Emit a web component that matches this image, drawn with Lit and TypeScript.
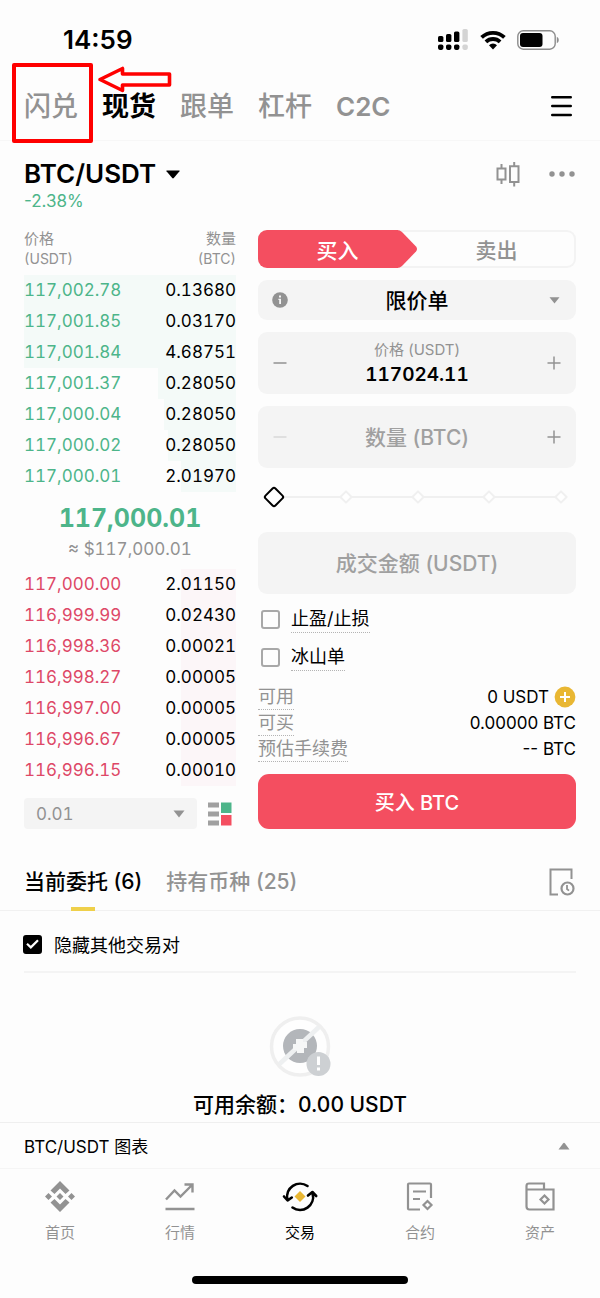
import { LitElement, html, css, svg } from "lit";
import { customElement, property, state } from "lit/decorators.js";
import { classMap } from "lit/directives/class-map.js";
import { styleMap } from "lit/directives/style-map.js";

interface Level {
  price: string;
  amount: string;
  /** Share of the row covered by the depth bar, in percent. */
  depth: number;
}

const UPPER: Level[] = [
  { price: "117,002.78", amount: "0.13680", depth: 100 },
  { price: "117,001.85", amount: "0.03170", depth: 100 },
  { price: "117,001.84", amount: "4.68751", depth: 100 },
  { price: "117,001.37", amount: "0.28050", depth: 37 },
  { price: "117,000.04", amount: "0.28050", depth: 34 },
  { price: "117,000.02", amount: "0.28050", depth: 32 },
  { price: "117,000.01", amount: "2.01970", depth: 26 },
];

const LOWER: Level[] = [
  { price: "117,000.00", amount: "2.01150", depth: 26 },
  { price: "116,999.99", amount: "0.02430", depth: 26 },
  { price: "116,998.36", amount: "0.00021", depth: 26 },
  { price: "116,998.27", amount: "0.00005", depth: 26 },
  { price: "116,997.00", amount: "0.00005", depth: 26 },
  { price: "116,996.67", amount: "0.00005", depth: 26 },
  { price: "116,996.15", amount: "0.00010", depth: 26 },
];

const base = css`
  :host,
  * {
    box-sizing: border-box;
  }
  button,
  input,
  select {
    font: inherit;
    color: inherit;
    background: none;
    border: 0;
    padding: 0;
    margin: 0;
    border-radius: 0;
    appearance: none;
    min-width: 0;
  }
  button {
    cursor: pointer;
  }
  a {
    color: inherit;
    text-decoration: none;
  }
  svg {
    display: block;
    flex: none;
  }
`;

@customElement("status-bar")
class StatusBar extends LitElement {
  static styles = [
    base,
    css`
      :host {
        display: flex;
        align-items: center;
        justify-content: space-between;
        height: 72px;
        padding: 8px 41px 0 63px;
      }
      .time {
        font-size: 26px;
        font-weight: 600;
        line-height: 32px;
      }
      .icons {
        display: flex;
        align-items: center;
        gap: 11px;
      }
    `,
  ];
  render() {
    return html`
      <span class="time">14:59</span>
      <span class="icons">
        <svg width="31" height="22" viewBox="0 0 31 22" aria-hidden="true">
          <g fill="#000">
            <rect x="0" y="7" width="5.4" height="6" rx="1.6" />
            <rect x="8" y="5" width="5.4" height="8" rx="1.6" />
            <rect x="16" y="2.5" width="5.4" height="10.5" rx="1.6" />
            <rect x="0" y="15.5" width="5.4" height="5.4" rx="1.8" />
            <rect x="8" y="15.5" width="5.4" height="5.4" rx="1.8" />
            <rect x="16" y="15.5" width="5.4" height="5.4" rx="1.8" />
          </g>
          <g fill="#d4d4d4">
            <rect x="24.4" y="0" width="5.4" height="13" rx="1.6" />
            <rect x="24.4" y="15.5" width="5.4" height="5.4" rx="1.8" />
          </g>
        </svg>
        <svg width="26" height="20" viewBox="0 0 26 20" aria-hidden="true">
          <g fill="none" stroke="#000" stroke-width="3.8">
            <path d="M1.6 7.4A16.4 16.4 0 0 1 24.4 7.4" />
            <path d="M5.9 11.9A10.2 10.2 0 0 1 20.1 11.9" />
          </g>
          <path d="M9 15.2a5.8 5.8 0 0 1 8 0L13 19.4z" />
        </svg>
        <svg width="42" height="20" viewBox="0 0 42 20" aria-hidden="true">
          <rect x=".8" y=".8" width="37.4" height="18.4" rx="5.4" fill="none" stroke="#8c8c8c" stroke-width="1.4" />
          <rect x="3" y="3" width="22.5" height="14" rx="3" />
          <path d="M39.8 6.8q2 1 2 3.2t-2 3.2z" fill="#8c8c8c" />
        </svg>
      </span>
    `;
  }
}

@customElement("market-tabs")
class MarketTabs extends LitElement {
  static styles = [
    base,
    css`
      :host {
        display: flex;
        align-items: center;
        justify-content: space-between;
        height: 69px;
        padding: 0 28px 0 24px;
        border-bottom: 1px solid #f7f7f7;
      }
      .tabs {
        display: flex;
        gap: 24px;
        padding-top: 2px;
        font-size: 27px;
        font-weight: 500;
        line-height: 40px;
        color: #929292;
      }
      .tab {
        position: relative;
        white-space: nowrap;
      }
      .active {
        color: #000;
        font-weight: 700;
      }
      .latin {
        font-size: 26px;
        font-weight: 600;
      }
      .mark {
        position: absolute;
        left: -12px;
        top: -24px;
        width: 160px;
        height: 82px;
        pointer-events: none;
      }
    `,
  ];
  render() {
    return html`
      <nav class="tabs">
        <a class="tab" href="#convert"
          >闪兑<svg class="mark" viewBox="0 0 160 82" fill="none" stroke="#f00" stroke-linejoin="round" aria-hidden="true">
            <rect x="2" y="2" width="77" height="76" stroke-width="4" />
            <path d="M88 16.5L110.5 5.5V11H157.5V22H110.5V27.5Z" stroke-width="3.6" />
          </svg></a
        >
        <a class="tab active" href="#spot" aria-current="page">现货</a>
        <a class="tab" href="#copy">跟单</a>
        <a class="tab" href="#margin">杠杆</a>
        <a class="tab latin" href="#c2c">C2C</a>
      </nav>
      <button aria-label="菜单">
        <svg width="21" height="22" viewBox="0 0 21 22" stroke="#000" stroke-width="2.4" stroke-linecap="round">
          <path d="M1.2 2.2H19.8M1.2 11H19.8M1.2 20H19.8" />
        </svg>
      </button>
    `;
  }
}

@customElement("pair-header")
class PairHeader extends LitElement {
  static styles = [
    base,
    css`
      :host {
        display: flex;
        justify-content: space-between;
        align-items: flex-start;
        padding: 16px 25px 0 24px;
      }
      .pair {
        display: flex;
        align-items: center;
        gap: 10px;
        font-size: 26px;
        font-weight: 600;
        line-height: 34px;
      }
      .change {
        font-size: 17px;
        line-height: 20px;
        color: #4db58a;
      }
      .tools {
        display: flex;
        align-items: center;
        gap: 29px;
        height: 34px;
      }
    `,
  ];
  render() {
    return html`
      <div>
        <button class="pair">
          BTC/USDT
          <svg width="14" height="9" viewBox="0 0 14 9"><path d="M.8.4H13.2Q14 .5 13.5 1.2L7.8 8Q7 8.9 6.2 8L.5 1.2Q0 .5.8.4Z" /></svg>
        </button>
        <div class="change">-2.38%</div>
      </div>
      <div class="tools">
        <button aria-label="K线">
          <svg width="24" height="26" viewBox="0 0 24 26" fill="none" stroke="#929292" stroke-width="2">
            <path d="M1.5 7.5H9.5V18.5H1.5ZM5.5 3V7.5M5.5 18.5V23M14 5.2H22.5V21H14ZM18.2 1V5.2M18.2 21V25.5" />
          </svg>
        </button>
        <button aria-label="更多">
          <svg width="26" height="6" viewBox="0 0 26 6" fill="#929292">
            <circle cx="3" cy="3" r="2.7" /><circle cx="13" cy="3" r="2.7" /><circle cx="23" cy="3" r="2.7" />
          </svg>
        </button>
      </div>
    `;
  }
}

@customElement("order-book")
class OrderBook extends LitElement {
  static styles = [
    base,
    css`
      :host {
        display: flex;
        flex-direction: column;
        font-variant-numeric: tabular-nums;
      }
      .levels {
        width: 100%;
        border-collapse: collapse;
        font-size: 17px;
      }
      th {
        padding: 0 0 6px;
        font-size: 15px;
        font-weight: 400;
        line-height: 20px;
        text-align: left;
        color: #929292;
      }
      .unit {
        display: block;
        font-size: 14px;
      }
      td {
        height: 31px;
        padding: 0;
        line-height: 31px;
      }
      th:last-child,
      td:last-child {
        text-align: right;
      }
      .up {
        --tint: #f4faf8;
      }
      .down {
        --tint: #fcf6f8;
      }
      .row {
        background: linear-gradient(var(--tint), var(--tint)) right / var(--depth) 100% no-repeat;
      }
      .up .price {
        color: #4db58a;
      }
      .down .price {
        color: #de4867;
      }
      .mid {
        padding: 8px 0 7px;
        text-align: center;
      }
      .last {
        font-size: 25px;
        font-weight: 700;
        line-height: 36px;
        color: #4db58a;
      }
      .fiat {
        font-size: 17px;
        line-height: 26px;
        color: #929292;
      }
      .controls {
        display: flex;
        align-items: center;
        gap: 11px;
        margin-top: 12px;
        padding-right: 4px;
      }
      .step {
        display: grid;
        flex: 1;
        align-items: center;
        background: #f4f4f4;
        border-radius: 4px;
      }
      .step > * {
        grid-area: 1 / 1;
      }
      .step select {
        height: 31px;
        padding: 0 12px;
        font-size: 17px;
        color: #929292;
      }
      .caret {
        justify-self: end;
        margin-right: 12px;
        pointer-events: none;
      }
    `,
  ];

  private rows(levels: Level[]) {
    return levels.map(
      (l) => html`<tr class="row" style=${styleMap({ "--depth": `${l.depth}%` })}>
        <td class="price">${l.price}</td>
        <td>${l.amount}</td>
      </tr>`
    );
  }

  render() {
    return html`
      <table class="levels up">
        <thead>
          <tr>
            <th>价格<span class="unit">(USDT)</span></th>
            <th>数量<span class="unit">(BTC)</span></th>
          </tr>
        </thead>
        <tbody>
          ${this.rows(UPPER)}
        </tbody>
      </table>
      <div class="mid">
        <div class="last">117,000.01</div>
        <div class="fiat">≈ $117,000.01</div>
      </div>
      <table class="levels down">
        <tbody>
          ${this.rows(LOWER)}
        </tbody>
      </table>
      <div class="controls">
        <div class="step">
          <select aria-label="价格精度">
            <option>0.01</option>
            <option>0.1</option>
            <option>1</option>
          </select>
          <svg class="caret" width="12" height="8" viewBox="0 0 12 8" fill="#929292"><path d="M.5.5H11.5L6 7.5Z" /></svg>
        </div>
        <button aria-label="盘口显示">
          <svg width="24" height="24" viewBox="0 0 24 24">
            <path d="M0 .5H11V5.5H0ZM0 9.5H11V14.5H0ZM0 18.5H11V23.5H0Z" fill="#a0a0a0" />
            <path d="M13 .5H23.5V11H13Z" fill="#4db58a" />
            <path d="M13 13H23.5V23.5H13Z" fill="#f44e60" />
          </svg>
        </button>
      </div>
    `;
  }
}

const sign = (kind: "minus" | "plus", faded = false) => svg`
  <svg width="14" height="14" viewBox="0 0 14 14" fill="none" stroke=${faded ? "#d8d8d8" : "#929292"} stroke-width="1.5">
    <path d=${kind === "plus" ? "M.5 7H13.5M7 .5V13.5" : "M.5 7H13.5"} />
  </svg>`;

@customElement("order-form")
class OrderForm extends LitElement {
  @state() private ratio = 0;

  static styles = [
    base,
    css`
      :host {
        display: flex;
        flex-direction: column;
        padding-top: 1px;
      }
      .sides {
        display: grid;
        grid-template-columns: 1fr 1fr;
        height: 38px;
        border-radius: 9px;
        box-shadow: inset 0 0 0 2px #f3f3f3;
        font-size: 21px;
        font-weight: 500;
      }
      .sell {
        color: #929292;
      }
      .buy {
        display: grid;
        align-items: center;
        color: #fff;
      }
      .buy > * {
        grid-area: 1 / 1;
      }
      .shape {
        display: flex;
        height: 38px;
      }
      .fill {
        flex: 1;
        background: #f44e60;
        border-radius: 9px 0 0 9px;
      }
      .tip {
        margin-left: -1px;
      }
      .field {
        display: grid;
        grid-template-columns: 44px 1fr 44px;
        align-items: center;
        justify-items: center;
        margin-top: 12px;
        background: #f4f4f4;
        border-radius: 9px;
      }
      .type {
        height: 40px;
      }
      .type select {
        grid-area: 1 / 1 / 2 / 4;
        width: 100%;
        height: 40px;
        font-size: 21px;
        font-weight: 500;
        text-align: center;
        text-align-last: center;
      }
      .info {
        grid-area: 1 / 1;
        pointer-events: none;
      }
      .caret {
        grid-area: 1 / 3;
        pointer-events: none;
      }
      .tall {
        height: 62px;
      }
      .field input {
        width: 100%;
        text-align: center;
      }
      .value {
        display: flex;
        flex-direction: column;
        align-items: center;
      }
      .value label {
        font-size: 15px;
        line-height: 22px;
        color: #929292;
      }
      .value input {
        height: 26px;
        font-size: 19px;
        font-weight: 600;
        font-variant-numeric: tabular-nums;
      }
      .entry {
        grid-column: 2;
        height: 40px;
        font-size: 21px;
        font-weight: 500;
      }
      .entry::placeholder {
        color: #a0a0a0;
        opacity: 1;
      }
      .slider {
        display: grid;
        align-items: center;
        height: 34px;
        margin: 12px 0 6px;
      }
      .slider > * {
        grid-area: 1 / 1;
      }
      .line {
        height: 2px;
        margin: 0 16px;
        background: #f0f0f0;
      }
      .stops {
        display: flex;
        justify-content: space-between;
        margin: 0 8px 0 9px;
      }
      .slider input {
        height: 24px;
        margin: 0 8px;
      }
      .slider input::-webkit-slider-thumb {
        appearance: none;
        width: 16px;
        height: 16px;
        background: #fff;
        border: 2px solid #000;
        border-radius: 3px;
        transform: rotate(45deg);
      }
      .options {
        display: flex;
        flex-direction: column;
        margin-top: 6px;
      }
      .option {
        display: flex;
        align-items: center;
        gap: 11px;
        height: 38px;
        padding: 0 0 0 3px;
        font-size: 18px;
      }
      .option input {
        width: 19px;
        height: 19px;
        border: 2px solid #a8a8a8;
        border-radius: 3px;
      }
      .option input:checked {
        background: #000;
      }
      .dotted {
        line-height: 26px;
        border-bottom: 1px dotted #b4b4b4;
      }
      .facts {
        margin: 8px 0 12px;
        font-size: 17px;
      }
      .fact {
        display: flex;
        justify-content: space-between;
        height: 26px;
      }
      .fact dt {
        font-size: 18px;
        line-height: 25px;
        color: #929292;
        border-bottom: 1px dotted #b4b4b4;
      }
      .fact dd {
        display: flex;
        align-items: center;
        gap: 5px;
        margin: 0;
        line-height: 24px;
      }
      .submit {
        height: 55px;
        background: #f44e60;
        border-radius: 11px;
        color: #fff;
        font-size: 20px;
        font-weight: 500;
      }
    `,
  ];

  render() {
    return html`
      <div class="sides">
        <button class="buy" aria-pressed="true">
          <span class="shape"
            ><span class="fill"></span
            ><svg class="tip" width="20" height="38" viewBox="0 0 20 38" fill="#f44e60">
              <path d="M0 0Q3 0 5 2L19 16.5Q21 19 19 21.5L5 36Q3 38 0 38Z" /></svg
          ></span>
          <span>买入</span>
        </button>
        <button class="sell" aria-pressed="false">卖出</button>
      </div>

      <div class="field type">
        <select aria-label="订单类型">
          <option>限价单</option>
          <option>市价单</option>
        </select>
        <svg class="info" width="16" height="16" viewBox="0 0 16 16">
          <circle cx="8" cy="8" r="7.8" fill="#929292" />
          <path d="M7 3.6H9V5.4H7ZM6.4 6.8H9V12H7.2V8H6.4Z" fill="#f4f4f4" />
        </svg>
        <svg class="caret" width="11" height="7" viewBox="0 0 11 7" fill="#929292"><path d="M.5.3H10.5L5.5 6.5Z" /></svg>
      </div>

      <div class="field tall">
        <button aria-label="降低价格">${sign("minus")}</button>
        <div class="value">
          <label for="price">价格 (USDT)</label>
          <input id="price" inputmode="decimal" .value=${"117024.11"} />
        </div>
        <button aria-label="提高价格">${sign("plus")}</button>
      </div>

      <div class="field tall">
        <button aria-label="减少数量">${sign("minus", true)}</button>
        <input class="entry" aria-label="数量 (BTC)" placeholder="数量 (BTC)" inputmode="decimal" />
        <button aria-label="增加数量">${sign("plus")}</button>
      </div>

      <div class="slider">
        <span class="line"></span>
        <span class="stops">
          ${[0, 25, 50, 75, 100].map(
            () => html`<svg width="14" height="14" viewBox="0 0 14 14">
              <path d="M7 1.4L12.6 7L7 12.6L1.4 7Z" fill="#fff" stroke="#f0f0f0" stroke-width="2" stroke-linejoin="round" />
            </svg>`
          )}
        </span>
        <input
          type="range"
          aria-label="比例"
          min="0"
          max="100"
          .value=${String(this.ratio)}
          @input=${(e: Event) => (this.ratio = Number((e.target as HTMLInputElement).value))}
        />
      </div>

      <div class="field tall">
        <input class="entry" aria-label="成交金额 (USDT)" placeholder="成交金额 (USDT)" inputmode="decimal" />
      </div>

      <div class="options">
        <label class="option"><input type="checkbox" /><span class="dotted">止盈/止损</span></label>
        <label class="option"><input type="checkbox" /><span class="dotted">冰山单</span></label>
      </div>

      <dl class="facts">
        <div class="fact">
          <dt>可用</dt>
          <dd>
            0 USDT
            <svg width="22" height="22" viewBox="0 0 22 22">
              <circle cx="11" cy="11" r="10.4" fill="#e9b733" />
              <path d="M11 6V16M6 11H16" stroke="#fff" stroke-width="2" />
            </svg>
          </dd>
        </div>
        <div class="fact">
          <dt>可买</dt>
          <dd>0.00000 BTC</dd>
        </div>
        <div class="fact">
          <dt>预估手续费</dt>
          <dd>-- BTC</dd>
        </div>
      </dl>

      <button class="submit">买入 BTC</button>
    `;
  }
}

@customElement("open-orders")
class OpenOrders extends LitElement {
  @state() private tab = 0;

  static styles = [
    base,
    css`
      :host {
        display: block;
      }
      .head {
        display: flex;
        justify-content: space-between;
        align-items: center;
        height: 58px;
        margin-top: 24px;
        padding: 0 25px 0 24px;
        border-bottom: 1px solid #f1f1f1;
      }
      .tabs {
        display: flex;
        gap: 24px;
        height: 58px;
      }
      .tab {
        display: grid;
        align-items: center;
        justify-items: center;
        grid-template-rows: 1fr 4px;
        font-size: 21px;
        font-weight: 500;
        color: #929292;
        white-space: nowrap;
      }
      .active {
        color: #000;
      }
      .active::after {
        content: "";
        width: 24px;
        height: 4px;
        background: #efd04a;
      }
      .filter {
        display: flex;
        align-items: center;
        gap: 12px;
        height: 62px;
        margin: 0 24px;
        padding-top: 6px;
        border-bottom: 2px solid #f4f4f4;
        font-size: 18px;
      }
      .box {
        display: grid;
        place-items: center;
        margin-left: -1px;
      }
      .box > * {
        grid-area: 1 / 1;
      }
      .box input {
        width: 19px;
        height: 19px;
        border: 2px solid #000;
        border-radius: 3px;
      }
      .box input:checked {
        background: #000;
      }
      .box svg {
        pointer-events: none;
      }
      .empty {
        display: flex;
        flex-direction: column;
        align-items: center;
        gap: 10px;
        padding: 42px 24px 1px;
        font-size: 21px;
        font-weight: 500;
        line-height: 32px;
      }
    `,
  ];

  render() {
    const tabs = ["当前委托 (6)", "持有币种 (25)"];
    return html`
      <div class="head">
        <div class="tabs" role="tablist">
          ${tabs.map(
            (t, i) => html`<button
              role="tab"
              class=${classMap({ tab: true, active: i === this.tab })}
              aria-selected=${i === this.tab}
              @click=${() => (this.tab = i)}
            >
              <span>${t}</span>
            </button>`
          )}
        </div>
        <button aria-label="历史委托">
          <svg width="26" height="28" viewBox="0 0 26 28" fill="none" stroke="#929292" stroke-width="2">
            <path d="M9 26.5H1.5V1.5H22.5V11" />
            <circle cx="18.5" cy="20.5" r="6" stroke-width="2.2" />
            <path d="M18 17V21L20 22.6" stroke-width="1.8" />
          </svg>
        </button>
      </div>
      <label class="filter">
        <span class="box"
          ><input type="checkbox" checked /><svg width="13" height="10" viewBox="0 0 13 10" fill="none" stroke="#fff" stroke-width="2.2">
            <path d="M1 4.8L4.8 8.4L12 1.2" /></svg
        ></span>
        隐藏其他交易对
      </label>
      <div class="empty">
        <svg width="62" height="64" viewBox="0 0 62 64">
          <circle cx="31" cy="31.5" r="28.5" fill="#fefefe" stroke="#efefef" stroke-width="3.5" />
          <circle cx="31" cy="31" r="17" fill="#b3b6ba" />
          <path d="M10.5 49L50 12" stroke="#eef0f1" stroke-width="4.5" />
          <path d="M27 24H34V27H38V33H35V38H28V35H24V29H27Z" fill="#f6f7f7" />
          <circle cx="49.5" cy="49" r="12" fill="#cdd0d3" />
          <path d="M49.5 41.5V50M49.5 52.5V55.5" stroke="#fff" stroke-width="3" />
        </svg>
        <div>可用余额：0.00 USDT</div>
      </div>
    `;
  }
}

const NAV = [
  {
    label: "首页",
    icon: svg`<g fill="#929292"><path d="M15 0L24.5 9.5L20.5 13L15 7.5L9.5 13L5.5 9.5Z"/><path d="M15 31L5.5 21.5L9.5 18L15 23.5L20.5 18L24.5 21.5Z"/><path d="M15 12L18.5 15.5L15 19L11.5 15.5ZM3.5 12L7 15.5L3.5 19L0 15.5ZM26.5 12L30 15.5L26.5 19L23 15.5Z"/></g>`,
  },
  {
    label: "行情",
    icon: svg`<g fill="none" stroke="#929292" stroke-width="2.4"><path d="M1 18.5L9.5 9.5L15.5 15.5L27 4M19.5 3.5H27.5V11.5M.5 28H29.5"/></g>`,
  },
  {
    label: "交易",
    icon: svg`<g fill="none" stroke="#000" stroke-width="2.6" stroke-linecap="round" stroke-linejoin="round"><path d="M22.5 5A13 13 0 0 0 2.4 18.5M-1 15.5L2.6 19.5L6.8 16.5"/><path d="M7.5 26.5A13 13 0 0 0 27.6 12.5M23 14.5L27.4 11L31.2 15"/></g><path d="M15 10L20.5 15.5L15 21L9.5 15.5Z" fill="#e9b733"/>`,
  },
  {
    label: "合约",
    icon: svg`<g fill="none" stroke="#929292" stroke-width="2.2"><path d="M15 28.5H4Q3 28.5 3 27.5V3.5Q3 2.5 4 2.5H25Q26 2.5 26 3.5V17M8 10.5H21M8 18H15"/><path d="M22.5 20L26.5 24L22.5 28L18.5 24Z"/></g>`,
  },
  {
    label: "资产",
    icon: svg`<g fill="none" stroke="#929292" stroke-width="2.2"><path d="M1.5 9V5Q1.5 2.5 4 2.5H19V8.5M1.5 6V25.5Q1.5 28.5 4.5 28.5H28.5V8.5H1.5"/><path d="M19.5 14.5L23.5 18.5L19.5 22.5L15.5 18.5Z"/></g>`,
  },
];

@customElement("bottom-nav")
class BottomNav extends LitElement {
  @property() current = "交易";

  static styles = [
    base,
    css`
      :host {
        display: block;
      }
      .chart {
        display: flex;
        align-items: center;
        justify-content: space-between;
        width: 100%;
        height: 46px;
        padding: 0 30px 0 24px;
        border-top: 1px solid #efefef;
        font-size: 17px;
      }
      .nav {
        display: grid;
        grid-template-columns: repeat(5, 1fr);
        padding-top: 12px;
        border-top: 1px solid #f5f5f5;
      }
      .item {
        display: flex;
        flex-direction: column;
        align-items: center;
        gap: 10px;
        font-size: 15px;
        line-height: 22px;
        color: #929292;
      }
      .item svg {
        overflow: visible;
      }
      .active {
        color: #000;
      }
      .home {
        width: 36%;
        height: 8px;
        margin: 32px auto 0;
        border-radius: 4px;
        background: #000;
      }
    `,
  ];

  render() {
    return html`
      <button class="chart">
        BTC/USDT 图表
        <svg width="12" height="8" viewBox="0 0 12 8" fill="#929292"><path d="M.5 7.5H11.5L7 1.4Q6 .3 5 1.4Z" /></svg>
      </button>
      <nav class="nav">
        ${NAV.map(
          (n) => html`<a class=${classMap({ item: true, active: n.label === this.current })} href="#">
            <svg width="30" height="31" viewBox="0 0 30 31">${n.icon}</svg>
            <span>${n.label}</span>
          </a>`
        )}
      </nav>
      <div class="home"></div>
    `;
  }
}

@customElement("app-root")
class AppRoot extends LitElement {
  static styles = css`
    :host {
      display: block;
      box-sizing: border-box;
      min-height: 100vh;
      background: #fdfdfd;
      color: #000;
      font-family: Inter, "Noto Sans CJK SC", sans-serif;
    }
    .trade {
      display: grid;
      grid-template-columns: 2fr 3fr;
      gap: 22px;
      padding: 18px 24px 0;
    }
  `;
  render() {
    return html`
      <status-bar></status-bar>
      <market-tabs></market-tabs>
      <pair-header></pair-header>
      <main class="trade">
        <order-book></order-book>
        <order-form></order-form>
      </main>
      <open-orders></open-orders>
      <bottom-nav></bottom-nav>
    `;
  }
}
